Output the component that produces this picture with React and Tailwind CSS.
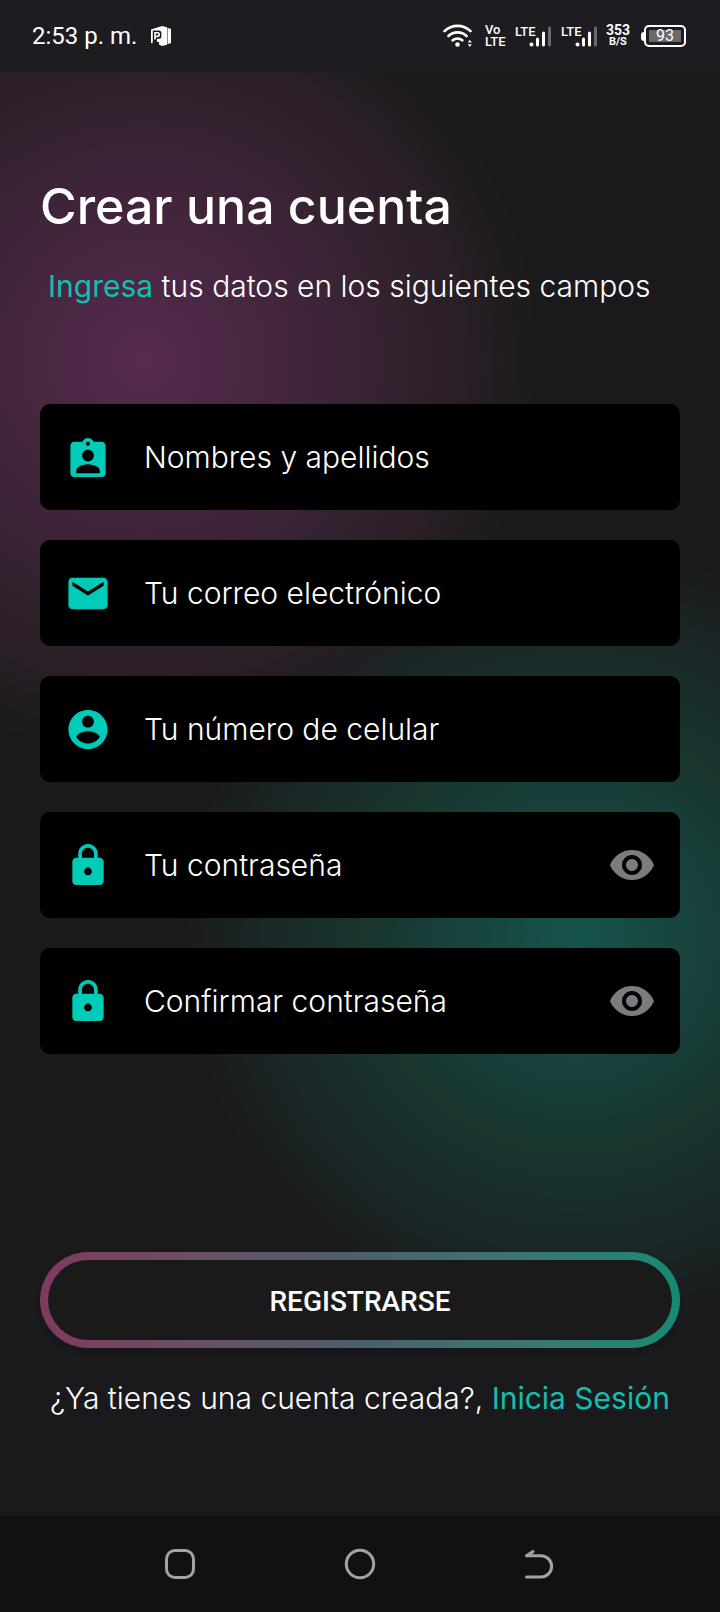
import { useState } from "react";

const ICONS = {
  badge:
    "M19 4h-4.180C14.400 2.840 13.300 2 12 2c-1.300 0-2.400.840-2.820 2H5c-1.100 0-2 .9-2 2v14c0 1.100.9 2 2 2h14c1.100 0 2-.9 2-2V6c0-1.100-.9-2-2-2zm-7 0c.55 0 1 .45 1 1s-.45 1-1 1-1-.45-1-1 .45-1 1-1zm0 4c1.660 0 3 1.340 3 3s-1.340 3-3 3-3-1.340-3-3 1.340-3 3-3zm6 12H6v-1.400c0-2 4-3.100 6-3.100s6 1.100 6 3.100V20z",
  mail:
    "M20 4H4c-1.1 0-1.99.9-1.99 2L2 18c0 1.1.9 2 2 2h16c1.1 0 2-.9 2-2V6c0-1.1-.9-2-2-2zm0 4l-8 5-8-5V6l8 5 8-5v2z",
  account:
    "M12 2C6.48 2 2 6.48 2 12s4.48 10 10 10 10-4.48 10-10S17.52 2 12 2zm0 3c1.66 0 3 1.34 3 3s-1.34 3-3 3-3-1.34-3-3 1.34-3 3-3zm0 14.2c-2.5 0-4.71-1.28-6-3.22.03-1.99 4-3.08 6-3.08 1.99 0 5.97 1.09 6 3.08-1.29 1.94-3.5 3.22-6 3.22z",
  lock:
    "M18 8h-1V6c0-2.76-2.24-5-5-5S7 3.24 7 6v2H6c-1.1 0-2 .9-2 2v10c0 1.1.9 2 2 2h12c1.1 0 2-.9 2-2V10c0-1.1-.9-2-2-2zm-6 9c-1.1 0-2-.9-2-2s.9-2 2-2 2 .9 2 2-.9 2-2 2zm3.1-9H8.9V6c0-1.71 1.39-3.1 3.1-3.1 1.71 0 3.1 1.39 3.1 3.1v2z",
  eye:
    "M12 4.5C7 4.5 2.73 7.61 1 12c1.73 4.39 6 7.5 11 7.5s9.27-3.11 11-7.5c-1.73-4.39-6-7.5-11-7.5zM12 17c-2.76 0-5-2.24-5-5s2.24-5 5-5 5 2.24 5 5-2.24 5-5 5zm0-8c-1.66 0-3 1.34-3 3s1.34 3 3 3 3-1.34 3-3-1.34-3-3-3z",
};

const FIELDS = [
  { id: "nombre", icon: "badge", label: "Nombres y apellidos", type: "text" },
  { id: "correo", icon: "mail", label: "Tu correo electrónico", type: "email" },
  { id: "celular", icon: "account", label: "Tu número de celular", type: "tel" },
  { id: "clave", icon: "lock", label: "Tu contraseña", type: "password" },
  { id: "confirmar", icon: "lock", label: "Confirmar contraseña", type: "password" },
];

function Icon({ name, label, className }) {
  return (
    <svg
      viewBox="0 0 24 24"
      fill="currentColor"
      className={className}
      role={label ? "img" : undefined}
      aria-label={label}
      aria-hidden={label ? undefined : "true"}
    >
      <path d={ICONS[name]} />
    </svg>
  );
}

function Signal() {
  return (
    <div className="relative h-6 w-9">
      <span className="absolute top-0 left-0 text-[13px] leading-4 font-medium">LTE</span>
      <svg viewBox="0 0 36 24" className="h-6 w-9" strokeWidth="3" strokeLinecap="round" aria-hidden="true">
        <path d="M16.5 20.5v0" stroke="white" strokeWidth="4" />
        <path d="M22.5 15v6M28.5 9v12" stroke="white" />
        <path d="M34.5 4v17" stroke="#6b6a6e" />
      </svg>
    </div>
  );
}

function StatusBar() {
  return (
    <header className="flex h-[72px] items-center bg-[#1d1c20] pr-[34px] pl-8 text-white">
      <span className="text-2xl leading-7">2:53 p. m.</span>
      <svg viewBox="0 0 20 20" className="ml-3.5 h-5 w-5" aria-hidden="true">
        <path d="M11 0l5 1.200v17.600l-5 1.200-3-1.500V16H1.500v1.500L0 17V3.500z" fill="white" />
        <path d="M16.500 1.700l3.500 1.300v14l-3.500 1.300z" fill="white" />
        <path d="M1.800 4.600h6a2.600 2.600 0 012.600 2.600v3a2.600 2.600 0 01-2.600 2.600H6v4H1.800z" fill="#1d1c20" />
        <path d="M4 13.500V6.700h2.400a1.800 1.800 0 010 3.700H4" fill="none" stroke="white" strokeWidth="1.6" />
      </svg>

      <div className="ml-auto flex items-center">
        <svg viewBox="0 0 30 24" className="h-6 w-[30px]" fill="none" stroke="white" strokeWidth="2.6" strokeLinecap="round" aria-hidden="true">
          <path d="M1.500 7.200a18.500 18.500 0 0126 0M5.500 12a13 13 0 0118 0M9.700 16.300a7.500 7.500 0 019.600 0" />
          <circle cx="14.5" cy="20.5" r="2.3" fill="white" stroke="none" />
          <path d="M24.800 18.500l2-2.700 2 2.700zM24.800 20.300h4l-2 2.700z" fill="white" stroke="none" />
        </svg>
        <div className="ml-3 flex w-[22px] flex-col text-[13px] leading-3 font-medium">
          <span>Vo</span>
          <span>LTE</span>
        </div>
        <div className="ml-2 flex gap-[10px]">
          <Signal />
          <Signal />
        </div>
        <div className="ml-[9px] flex flex-col items-center font-bold">
          <span className="text-[14px] leading-3">353</span>
          <span className="text-[11px] leading-3">B/S</span>
        </div>
        <div className="ml-[11px] flex items-center">
          <span className="h-[9px] w-[3px] rounded-l-sm bg-white" />
          <span className="flex h-[22px] w-[42px] rounded-[5px] border-2 border-white p-[3px]">
            <span className="flex flex-1 items-center justify-center bg-[#6a696c] text-base leading-4">93</span>
          </span>
        </div>
      </div>
    </header>
  );
}

function Field({ id, icon, label, type }) {
  const [visible, setVisible] = useState(false);
  const secret = type === "password";
  return (
    <div className="flex h-[106px] items-center rounded-[10px] bg-black px-6">
      <label htmlFor={id} className="mr-8 shrink-0 text-[#00cbb9]">
        <Icon name={icon} label={label} className="h-[47px] w-12" />
      </label>
      <input
        id={id}
        type={secret && visible ? "text" : type}
        placeholder={label}
        className="h-16 min-w-0 flex-1 bg-transparent text-[30px] font-light text-white outline-none placeholder:text-white"
      />
      {secret && (
        <button
          type="button"
          aria-label="Mostrar u ocultar contraseña"
          onClick={() => setVisible(!visible)}
          className="shrink-0 text-[#7e7b80]"
        >
          <Icon name="eye" className="h-12 w-12" />
        </button>
      )}
    </div>
  );
}

function NavBar() {
  return (
    <nav className="grid h-24 grid-cols-3 bg-[#111113] px-[90px] text-[#a3a2a4]">
      <button type="button" aria-label="Recientes" className="flex items-center justify-center">
        <svg viewBox="0 0 32 32" className="h-8 w-8" fill="none" stroke="currentColor" strokeWidth="3">
          <rect x="2.5" y="2.5" width="27" height="27" rx="8.5" />
        </svg>
      </button>
      <button type="button" aria-label="Inicio" className="flex items-center justify-center">
        <svg viewBox="0 0 32 32" className="h-8 w-8" fill="none" stroke="currentColor" strokeWidth="3">
          <circle cx="16" cy="16" r="13.7" />
        </svg>
      </button>
      <button type="button" aria-label="Atrás" className="flex items-center justify-center">
        <svg viewBox="0 0 32 32" className="h-8 w-8" fill="none" stroke="currentColor" strokeWidth="3" strokeLinecap="round" strokeLinejoin="round">
          <path d="M2.500 29H17a10.600 10.600 0 000-21.200H2.500L9 3.500" />
          <path d="M3 7.500l6-3.500-2 3.500z" fill="currentColor" strokeWidth="1" />
        </svg>
      </button>
    </nav>
  );
}

export default function App() {
  return (
    <div className="flex min-h-screen flex-col bg-[#1a1a1c] font-[Roboto,sans-serif]">
      <StatusBar />
      <main className="flex flex-1 flex-col bg-[radial-gradient(circle_396px_at_20%_20%,#562b4f,#41253b_40%,#2a1f27_80%,#1a1a1c00),radial-gradient(circle_396px_at_80%_60%,#15544a,#183f3b_35%,#18362f_52%,#1a2827_78%,#1a1a1c00)] px-10 pt-[106px] pb-[102px] font-[Inter,sans-serif] text-white">
        <h1 className="text-[50px] leading-14 font-medium">Crear una cuenta</h1>
        <p className="mt-9 px-2 text-[30px] leading-8 font-light">
          <strong className="font-normal text-[#13bfb1]">Ingresa</strong> tus datos en los siguientes campos
        </p>
        <form className="mt-[102px] flex flex-1 flex-col gap-[30px]" onSubmit={(e) => e.preventDefault()}>
          {FIELDS.map((field) => (
            <Field key={field.id} {...field} />
          ))}
          <div className="mt-auto flex rounded-full bg-linear-to-r from-[#80395f] via-[#4b606d] to-[#108b75] p-2 shadow-md">
            <button
              type="submit"
              className="h-20 flex-1 rounded-full bg-[#1a1a1b] pt-1 font-[Roboto,sans-serif] text-[28px] font-medium"
            >
              REGISTRARSE
            </button>
          </div>
        </form>
        <p className="mt-[34px] text-center text-[30px] leading-8 font-light">
          ¿Ya tienes una cuenta creada?,{" "}
          <a href="#login" className="font-normal text-[#13bfb1]">
            Inicia Sesión
          </a>
        </p>
      </main>
      <NavBar />
    </div>
  );
}
